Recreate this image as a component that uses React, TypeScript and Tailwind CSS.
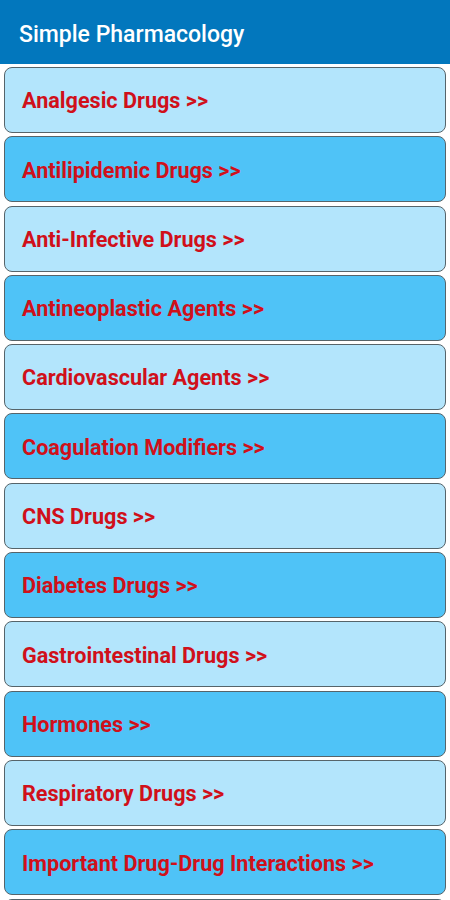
import React from 'react';

const categories = [
  'Analgesic Drugs',
  'Antilipidemic Drugs',
  'Anti-Infective Drugs',
  'Antineoplastic Agents',
  'Cardiovascular Agents',
  'Coagulation Modifiers',
  'CNS Drugs',
  'Diabetes Drugs',
  'Gastrointestinal Drugs',
  'Hormones',
  'Respiratory Drugs',
  'Important Drug-Drug Interactions',
];

export default function App() {
  return (
    <div className="w-[450px] h-[900px] overflow-hidden bg-white font-['Roboto',sans-serif]">
      <div className="h-16 bg-[#0277bd] flex items-center px-[19px] pt-[6px]">
        <h1 className="text-white text-[23px] font-medium">Simple Pharmacology</h1>
      </div>
      <ul className="flex flex-col gap-[3.3px] px-1 pt-[3px]">
        {categories.map((name, i) => (
          <li
            key={name}
            className={`h-[66px] shrink-0 flex items-center px-[17px] pt-[3px] rounded-lg border border-[#56646a] ${
              i % 2 === 0 ? 'bg-[#b3e5fc]' : 'bg-[#4fc3f7]'
            }`}
          >
            <span className="text-[#d0101a] text-[21.6px] font-bold">{name} &gt;&gt;</span>
          </li>
        ))}
        <li className="h-[66px] shrink-0 rounded-lg border border-[#56646a] bg-[#b3e5fc]" />
      </ul>
    </div>
  );
}
